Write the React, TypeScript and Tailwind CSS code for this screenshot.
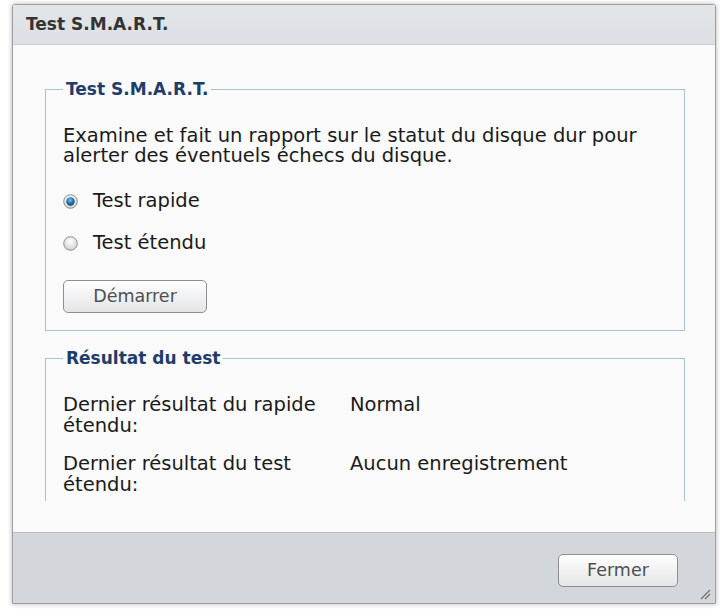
import React from 'react'

const font = { fontFamily: '"DejaVu Sans", Verdana, sans-serif' }

function Radio({ checked }: { checked?: boolean }) {
  return (
    <svg width="15" height="15" viewBox="0 0 15 15" className="shrink-0">
      <defs>
        <radialGradient id="rOff" cx="50%" cy="35%" r="65%">
          <stop offset="0%" stopColor="#ffffff" />
          <stop offset="100%" stopColor="#cfcfcf" />
        </radialGradient>
        <radialGradient id="rOn" cx="45%" cy="35%" r="60%">
          <stop offset="0%" stopColor="#7fc3ea" />
          <stop offset="60%" stopColor="#1f77b4" />
          <stop offset="100%" stopColor="#0d4f80" />
        </radialGradient>
      </defs>
      <circle cx="7.5" cy="7.5" r="6.8" fill="url(#rOff)" stroke="#8f8f8f" strokeWidth="1" />
      {checked && <circle cx="7.5" cy="7.5" r="4.2" fill="url(#rOn)" />}
    </svg>
  )
}

function Button({ label, className }: { label: string; className?: string }) {
  return (
    <button
      className={
        'h-[33px] rounded-[5px] border border-[#8e8e8e] bg-gradient-to-b from-[#fefefe] to-[#e3e5e7] text-[17.5px] text-[#4f4f4f] shadow-[inset_0_1px_0_#ffffff] ' +
        (className ?? '')
      }
      style={font}
    >
      {label}
    </button>
  )
}

function Group({ title, children, className }: { title: string; children: React.ReactNode; className?: string }) {
  return (
    <fieldset className={'border border-[#a7c1d9] px-[17px] ' + (className ?? '')}>
      <legend className="px-[3px] text-[17px] font-bold leading-[20px] text-[#1d3d6b]">{title}</legend>
      {children}
    </fieldset>
  )
}

export default function App() {
  return (
    <div className="w-[723px] h-[609px] bg-white pl-[12px] pt-[4px]" style={font}>
      <div className="relative flex flex-col w-[704px] h-[600px] border border-[#9c9ea1] rounded-t-[3px] shadow-[0_0_5px_rgba(0,0,0,0.3)] overflow-hidden">
        <div className="h-[40px] shrink-0 flex items-center px-[13px] bg-gradient-to-b from-[#e3e6e9] to-[#dcdfe3] border-b border-[#c9cdd1]">
          <span className="text-[17px] font-bold text-[#333333]">Test S.M.A.R.T.</span>
        </div>

        <div className="flex-1 min-h-0 flex flex-col bg-[#fafafa] pb-[31px]">
          <div className="flex-1 min-h-0 overflow-hidden pt-[34px] pl-[32px] pr-[30px] text-[19.5px] text-[#1a1a1a]">
            <Group title="Test S.M.A.R.T." className="pb-[17px]">
              <p className="mt-[27px] leading-[20px]">
                Examine et fait un rapport sur le statut du disque dur pour alerter des éventuels échecs du disque.
              </p>
              <div className="mt-[25px] flex flex-col gap-[22px]">
                <label className="flex items-center gap-[15px] leading-[20px]">
                  <Radio checked />
                  Test rapide
                </label>
                <label className="flex items-center gap-[15px] leading-[20px]">
                  <Radio />
                  Test étendu
                </label>
              </div>
              <Button label="Démarrer" className="mt-[27px] w-[144px]" />
            </Group>

            <Group title="Résultat du test" className="mt-[17px] pb-[20px]">
              <div className="mt-[26px] flex flex-col gap-[17px] leading-[21px]">
                <div className="flex">
                  <span className="w-[287px]">Dernier résultat du rapide étendu:</span>
                  <span>Normal</span>
                </div>
                <div className="flex">
                  <span className="w-[287px]">Dernier résultat du test étendu:</span>
                  <span>Aucun enregistrement</span>
                </div>
              </div>
            </Group>
          </div>
        </div>

        <div className="h-[71px] shrink-0 flex items-start justify-end pt-[21px] pr-[37px] bg-[#d3d7db] border-t border-[#b8bcc0]">
          <Button label="Fermer" className="w-[120px]" />
        </div>

        <svg width="12" height="12" viewBox="0 0 12 12" className="absolute right-[4px] bottom-[3px]">
          <path d="M2 11 L11 2 M6 11 L11 6" stroke="#6f7275" strokeWidth="1.2" />
        </svg>
      </div>
    </div>
  )
}
